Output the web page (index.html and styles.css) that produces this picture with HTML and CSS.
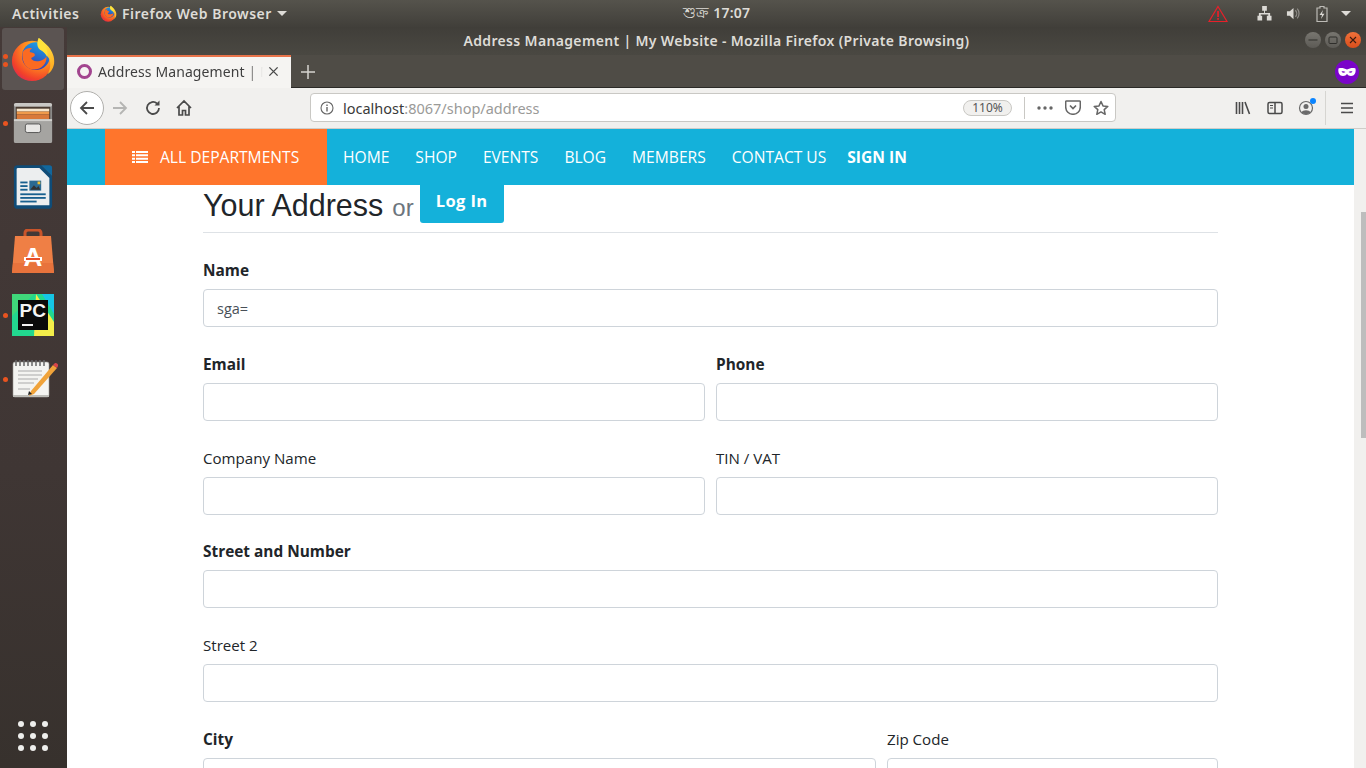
FILE: index.html

```html
<!DOCTYPE html>
<html lang="en">
<head>
<meta charset="UTF-8">
<title>Address Management | My Website</title>
<link rel="stylesheet" href="styles.css">
</head>
<body>

<svg class="defs" width="0" height="0">
  <defs>
    <radialGradient id="ffBody" cx="0.72" cy="0.2" r="0.95">
      <stop offset="0" stop-color="#ffcb2e"/>
      <stop offset="0.45" stop-color="#ff8a1e"/>
      <stop offset="0.8" stop-color="#f2412a"/>
      <stop offset="1" stop-color="#d9245a"/>
    </radialGradient>
    <linearGradient id="ffGlobe" x1="0.7" y1="0" x2="0.3" y2="1">
      <stop offset="0" stop-color="#16a4e6"/>
      <stop offset="1" stop-color="#3a30b0"/>
    </linearGradient>
    <linearGradient id="ffTail" x1="0.3" y1="0" x2="0.7" y2="1">
      <stop offset="0" stop-color="#fff04a"/>
      <stop offset="1" stop-color="#ffa51e"/>
    </linearGradient>
    <symbol id="firefox" viewBox="0 0 48 48">
      <circle cx="23" cy="26" r="21" fill="url(#ffBody)"/>
      <circle cx="27" cy="21" r="14.5" fill="url(#ffGlobe)"/>
      <path d="M13 17c3-4 7-5 10-4-2 1-3 3-2 4 2 0 5 1 5 3 0 1-3 2-4 3 1 3 5 4 9 3 3-1 6-2 7-5 1 7-5 14-13 14-7 0-13-6-12-18z" fill="#fb6a22"/>
      <path d="M30 2c3 2 7 6 10 9 4 5 7 11 6 18-1 6-4 9-7 11 3-5 4-11 2-16-2-4-6-8-10-10-2-4-2-8-1-12z" fill="url(#ffTail)"/>
      <path d="M30 2c-2 4-2 8 0 11 4 2 7 5 9 9 1-6-2-15-9-20z" fill="#ffe23a"/>
    </symbol>
  </defs>
</svg>

<header class="topbar">
  <span class="activities">Activities</span>
  <span class="app-menu">
    <svg class="app-ff"><use href="#firefox"/></svg>
    Firefox Web Browser
    <i class="caret"></i>
  </span>
  <span class="clock"><span class="clock-day">শুক্র</span> 17:07</span>
  <svg class="tray-warn" viewBox="0 0 20 18"><path d="M10 1.500 19 16.500H1z" fill="none" stroke="#e8202a" stroke-width="1.200"/><rect x="9.200" y="6" width="1.700" height="6" fill="#e8202a"/><rect x="9.200" y="13" width="1.700" height="1.800" fill="#e8202a"/></svg>
  <svg class="tray-net" viewBox="0 0 16 16"><path d="M5.500 0h5v5h-2v2.500h5.500v3h1.500v5h-5v-5h1.500V9H4v1.500h1.500v5h-5v-5H2v-3h5.500V5h-2z" fill="#dcdad5"/></svg>
  <svg class="tray-vol" viewBox="0 0 16 16"><path d="M1 5.500h3L8 2v12L4 10.500H1z" fill="#dcdad5"/><path d="M10 4.500a5 5 0 0 1 0 7M12 2.800a8 8 0 0 1 0 10.400" fill="none" stroke="#8f8d88" stroke-width="1.300"/></svg>
  <svg class="tray-bat" viewBox="0 0 12 16"><path d="M4 .5h4v1.500h3v13.500H1V2h3z" fill="none" stroke="#bdbbb6" stroke-width="1.200"/><path d="M7 4 3.500 9H6l-1 4 3.500-5.200H6z" fill="#dcdad5"/></svg>
  <i class="caret tray-caret"></i>
</header>

<div class="desktop">
  <aside class="dock">
    <div class="dock-item active">
      <i class="dot dot-a"></i><i class="dot dot-b"></i>
      <svg class="dock-ff"><use href="#firefox"/></svg>
    </div>
    <div class="dock-item">
      <i class="dot"></i>
      <svg class="dock-icon" viewBox="0 0 44 44">
        <rect x="2" y="1" width="40" height="42" rx="3" fill="#8a8987"/>
        <rect x="2" y="1" width="40" height="4" rx="2" fill="#c9c8c5"/>
        <rect x="4" y="5" width="36" height="13" fill="#4a3b30"/>
        <rect x="5" y="7" width="34" height="3" fill="#f5e6cf"/>
        <rect x="5" y="10" width="34" height="3" fill="#ef9a4c"/>
        <rect x="5" y="13" width="34" height="5" fill="#d9793a"/>
        <rect x="2" y="18" width="40" height="25" rx="2" fill="#a5a4a1"/>
        <rect x="2" y="18" width="40" height="2" fill="#d2d1ce"/>
        <rect x="14" y="23" width="16" height="9" rx="2" fill="#e8e7e5" stroke="#555" stroke-width="1"/>
      </svg>
    </div>
    <div class="dock-item">
      <svg class="dock-icon writer" viewBox="0 0 44 50">
        <path d="M5 1h26l12 12v32a4 4 0 0 1-4 4H5a4 4 0 0 1-4-4V5a4 4 0 0 1 4-4z" fill="#0f4c78"/>
        <path d="M5 4h24l11 11v30H4V5z" fill="#eceeef"/>
        <path d="M31 1h9a3 3 0 0 1 3 3v9z" fill="#11679d"/>
        <rect x="8" y="19" width="8" height="2" fill="#18608f"/>
        <rect x="8" y="23" width="8" height="2" fill="#18608f"/>
        <rect x="8" y="27" width="8" height="2" fill="#18608f"/>
        <rect x="18" y="18" width="13" height="11" fill="#2b6a92"/>
        <path d="M19 28l4-5 3 3 2-2 2 4z" fill="#333"/>
        <rect x="27" y="19" width="3" height="3" fill="#f2c230"/>
        <rect x="8" y="32" width="28" height="2" fill="#18608f"/>
        <rect x="8" y="36" width="28" height="2" fill="#18608f"/>
        <rect x="8" y="40" width="18" height="2" fill="#18608f"/>
      </svg>
    </div>
    <div class="dock-item">
      <svg class="dock-icon store" viewBox="0 0 42 44">
        <path d="M13 9V4a3 3 0 0 1 3-3h10a3 3 0 0 1 3 3v5" fill="none" stroke="#c9542a" stroke-width="3"/>
        <path d="M3 7h36l3 37H0z" fill="#ef7f45"/>
        <path d="M1 34h40l1 10H0z" fill="#e8733c"/>
        <text class="store-a" x="21" y="37" text-anchor="middle">A</text>
        <rect x="12" y="28" width="18" height="4" fill="#fff"/>
        <rect x="14" y="29" width="14" height="2" fill="#e8502a"/>
      </svg>
    </div>
    <div class="dock-item">
      <i class="dot"></i>
      <svg class="dock-icon" viewBox="0 0 42 42">
        <rect width="42" height="42" fill="#22d88f"/>
        <path d="M24 0 42 28v14H22z" fill="#f4ee4a"/>
        <path d="M14 0h16L42 20V0z" fill="#16c6e6"/>
        <path d="M0 0h22L0 22z" fill="#3fd87a"/>
        <rect x="6" y="6" width="30" height="30" fill="#0a0a0a"/>
        <text class="pc-text" x="7.500" y="23">PC</text>
        <rect x="10" y="30" width="11" height="2" fill="#f2f2f2"/>
      </svg>
    </div>
    <div class="dock-item">
      <i class="dot"></i>
      <svg class="dock-icon note" viewBox="0 0 46 40">
        <rect x="1" y="3" width="36" height="35" rx="2" fill="#f4f4f1" stroke="#9a9a96" stroke-width=".6"/>
        <path d="M1 36h36v2H1z" fill="#bdbdb8"/>
        <path d="M4 1v6M8 1v6M12 1v6M16 1v6M20 1v6M24 1v6M28 1v6M32 1v6" stroke="#666" stroke-width="1.500"/>
        <path d="M6 12h24M6 16h24M6 20h20M6 24h16M6 30h12" stroke="#aaa" stroke-width="1"/>
        <path d="M19 32 41 6l4 3-23 26-5 2z" fill="#f0a33a"/>
        <path d="M41 6l2-2a2.500 2.500 0 0 1 3 3l-1 2z" fill="#d8454a"/>
        <path d="M17 32l-1 4 4-1z" fill="#222"/>
      </svg>
    </div>
    <div class="app-grid">
      <i></i><i></i><i></i><i></i><i></i><i></i><i></i><i></i><i></i>
    </div>
  </aside>

  <div class="window">
    <div class="titlebar">
      <span class="win-title">Address Management | My Website - Mozilla Firefox (Private Browsing)</span>
      <span class="win-btns">
        <i class="win-btn"><svg viewBox="0 0 16 16"><path d="M3.500 8h9" stroke="#2f2e2b" stroke-width="1"/></svg></i>
        <i class="win-btn"><svg viewBox="0 0 16 16"><rect x="4" y="5" width="8" height="6.500" rx="1" fill="none" stroke="#2f2e2b"/></svg></i>
        <i class="win-btn close"><svg viewBox="0 0 16 16"><path d="M5 5l6 6M11 5l-6 6" stroke="#3a1b10" stroke-width="1.100"/></svg></i>
      </span>
    </div>

    <div class="tabbar">
      <div class="tab">
        <i class="tab-fav"></i>
        <span class="tab-title">Address Management | M</span>
        <svg class="tab-close" viewBox="0 0 12 12"><path d="M1.500 1.500l9 9M10.500 1.500l-9 9" stroke="#4a4a4a" stroke-width="1.500"/></svg>
      </div>
      <svg class="new-tab" viewBox="0 0 14 14"><path d="M7 0v14M0 7h14" stroke="#d6d4cf" stroke-width="1.500"/></svg>
      <svg class="mask" viewBox="0 0 24 24"><circle cx="12" cy="12" r="12" fill="#7a04c9"/><path d="M3.500 8.500c3-1 6 0 8.500 1 2.500-1 5.500-2 8.500-1 .8 4-1 7.500-4.500 7.500-2 0-3-1-4-2-1 1-2 2-4 2-3.500 0-5.300-3.500-4.500-7.500z" fill="#fff"/><path d="M6.500 11.500c1.500-.6 3-.4 4 .5-1.500 1-3 1-4-.5zM17.500 11.500c-1.500-.6-3-.4-4 .5 1.500 1 3 1 4-.5z" fill="#7a04c9"/></svg>
    </div>

    <div class="toolbar">
      <span class="back"><svg viewBox="0 0 18 18"><path d="M16 9H3M9 3 3 9l6 6" fill="none" stroke="#4a4a4a" stroke-width="1.800"/></svg></span>
      <svg class="tool forward" viewBox="0 0 18 18"><path d="M2 9h13M9 3l6 6-6 6" fill="none" stroke="#b5b5b3" stroke-width="1.800"/></svg>
      <svg class="tool reload" viewBox="0 0 18 18"><path d="M15 9a6 6 0 1 1-2-4.500" fill="none" stroke="#4a4a4a" stroke-width="1.800"/><path d="M15.500 1.500v5h-5z" fill="#4a4a4a"/></svg>
      <svg class="tool home" viewBox="0 0 18 18"><path d="M2 9l7-7 7 7M4 7.500V16h3.500v-4.500h3V16H14V7.500" fill="none" stroke="#4a4a4a" stroke-width="1.700"/></svg>

      <div class="urlbar">
        <svg class="url-info" viewBox="0 0 14 14"><circle cx="7" cy="7" r="6" fill="none" stroke="#666" stroke-width="1.100"/><rect x="6.300" y="6" width="1.400" height="4.500" fill="#666"/><rect x="6.300" y="3.500" width="1.400" height="1.500" fill="#666"/></svg>
        <span class="url-text"><b>localhost</b>:8067/shop/address</span>
        <span class="url-zoom">110%</span>
        <i class="url-sep"></i>
        <svg class="url-more" viewBox="0 0 16 4"><circle cx="2" cy="2" r="1.700"/><circle cx="8" cy="2" r="1.700"/><circle cx="14" cy="2" r="1.700"/></svg>
        <svg class="url-pocket" viewBox="0 0 16 15"><path d="M1.500 1h13a.8.8 0 0 1 .8.8V7a7.300 7.300 0 0 1-14.600 0V1.800a.8.8 0 0 1 .8-.8z" fill="none" stroke="#666" stroke-width="1.500"/><path d="M5 5.500l3 3 3-3" fill="none" stroke="#666" stroke-width="1.700"/></svg>
        <svg class="url-star" viewBox="0 0 16 16"><path d="M8 1.500l2 4.400 4.800.5-3.600 3.200 1 4.700L8 11.900l-4.200 2.400 1-4.700L1.200 6.400 6 5.900z" fill="none" stroke="#666" stroke-width="1.500" stroke-linejoin="round"/></svg>
      </div>

      <svg class="tool lib" viewBox="0 0 16 16"><path d="M1.500 2v12M4.500 2v12M7.500 2v12M10 2l4.500 12" fill="none" stroke="#4a4a4a" stroke-width="1.600"/></svg>
      <svg class="tool side" viewBox="0 0 16 16"><rect x="1" y="2.500" width="14" height="11" rx="1.500" fill="none" stroke="#4a4a4a" stroke-width="1.500"/><path d="M8 2.500v11" stroke="#4a4a4a" stroke-width="1.500"/><path d="M3 5.500h3M3 8h3" stroke="#4a4a4a"/></svg>
      <span class="account">
        <svg class="tool" viewBox="0 0 16 16"><circle cx="8" cy="8" r="6.500" fill="none" stroke="#6a6a6a" stroke-width="1.200"/><circle cx="8" cy="6.500" r="2.500" fill="#6a6a6a"/><path d="M3.500 12.500c1-3 8-3 9 0-2 2-7 2-9 0z" fill="#6a6a6a"/></svg>
        <i class="account-dot"></i>
      </span>
      <i class="tool-sep"></i>
      <svg class="tool burger" viewBox="0 0 14 14"><path d="M1 2.500h12M1 7h12M1 11.500h12" stroke="#4a4a4a" stroke-width="1.600"/></svg>
    </div>

    <div class="viewport">
      <div class="page">
        <nav class="shopnav">
          <a class="departments">
            <svg class="list-icon" viewBox="0 0 16 12"><path d="M0 0h3v2H0zM4 0h12v2H4zM0 3.300h3v2H0zM4 3.300h12v2H4zM0 6.700h3v2H0zM4 6.700h12v2H4zM0 10h3v2H0zM4 10h12v2H4z" fill="#fff"/></svg>
            ALL DEPARTMENTS
          </a>
          <a class="nav-link">HOME</a>
          <a class="nav-link">SHOP</a>
          <a class="nav-link">EVENTS</a>
          <a class="nav-link">BLOG</a>
          <a class="nav-link">MEMBERS</a>
          <a class="nav-link">CONTACT US</a>
          <a class="nav-link sign-in">SIGN IN</a>
        </nav>

        <form class="address-form">
          <div class="form-head">
            <h1>Your Address</h1>
            <small>or</small>
            <a class="btn-login">Log In</a>
          </div>

          <div class="field">
            <label class="req">Name</label>
            <input type="text" value="sga=">
          </div>

          <div class="form-row">
            <div class="field">
              <label class="req">Email</label>
              <input type="text">
            </div>
            <div class="field">
              <label class="req">Phone</label>
              <input type="text">
            </div>
          </div>

          <div class="form-row">
            <div class="field">
              <label>Company Name</label>
              <input type="text">
            </div>
            <div class="field">
              <label>TIN / VAT</label>
              <input type="text">
            </div>
          </div>

          <div class="field">
            <label class="req">Street and Number</label>
            <input type="text">
          </div>

          <div class="field">
            <label>Street 2</label>
            <input type="text">
          </div>

          <div class="form-row city-row">
            <div class="field">
              <label class="req">City</label>
              <input type="text">
            </div>
            <div class="field">
              <label>Zip Code</label>
              <input type="text">
            </div>
          </div>
        </form>
      </div>
      <div class="scrollbar"><i class="thumb"></i></div>
    </div>
  </div>
</div>

</body>
</html>
```

FILE: styles.css

```css
*{box-sizing:border-box}
html,body{margin:0;height:100%;overflow:hidden}
body{width:1366px;height:768px;display:flex;flex-direction:column;font-family:"Noto Sans","Open Sans",sans-serif;background:#fff}
.defs{position:absolute}
i{display:block;font-style:normal}

/* --- ubuntu top bar --- */
.topbar{height:27px;flex:none;display:flex;align-items:center;position:relative;color:#dedcd7;font-size:14px;font-weight:600;letter-spacing:.5px;background:linear-gradient(#55534c,#413f3a)}
.activities{margin-left:12px;width:88px}
.app-menu{display:flex;align-items:center;flex:1}
.app-ff{width:17px;height:17px;margin-right:5px}
.caret{width:0;height:0;border-left:5px solid transparent;border-right:5px solid transparent;border-top:5px solid #dedcd7;margin-left:5px}
.clock{position:absolute;left:683px;top:2px;font-size:14px;line-height:20px;font-weight:600;letter-spacing:.2px}
.clock-day{font-weight:400;font-size:15px}
.tray-warn{width:20px;height:18px}
.tray-net{width:15px;height:15px;margin-left:29px}
.tray-vol{width:15px;height:15px;margin-left:14px}
.tray-bat{width:12px;height:16px;margin-left:15px}
.tray-caret{margin:0 15px 0 13px}

.desktop{flex:1;display:flex;min-height:0}

/* --- dock --- */
.dock{width:67px;flex:none;display:flex;flex-direction:column;padding:1px 0 0 2px;background:linear-gradient(#453a38,#3f3634 60%,#37312d);position:relative}
.dock-item{width:62px;height:64px;display:flex;align-items:center;justify-content:center;position:relative;flex:none;padding-bottom:3px}
.dock-item.active{height:62px;margin-bottom:2px;background:#5b5452;border-radius:3px;padding-bottom:0}
.dock-icon{width:42px;height:42px}
.dock-icon.writer{width:40px;height:48px}
.dock-icon.store{width:42px;height:44px}
.dock-icon.note{width:46px;height:40px;margin-left:4px}
.dock-ff{width:46px;height:46px}
.dot{position:absolute;left:1px;top:50%;width:5px;height:5px;margin-top:-3px;border-radius:50%;background:#e95420}
.dot-a{margin-top:-5px}
.dot-b{margin-top:3px}
.store-a{font:bold 26px "Liberation Sans",sans-serif;fill:#fff}
.pc-text{font:bold 19px "Liberation Sans",sans-serif;fill:#f5f5f5}
.app-grid{margin:auto 0 17px 16px;display:grid;grid-template-columns:repeat(3,6px);gap:6px}
.app-grid i{width:6px;height:6px;border-radius:50%;background:#eeeeec}

/* --- firefox window --- */
.window{flex:1;min-width:0;display:flex;flex-direction:column}
.titlebar{height:28px;flex:none;display:flex;align-items:center;background:linear-gradient(#403e39,#4a4842);position:relative;padding-bottom:2px}
.win-title{flex:1;text-align:center;color:#dedcd7;font-size:14px;font-weight:600;letter-spacing:.34px}
.win-btns{display:flex;gap:4px;position:absolute;right:5px;top:5px}
.win-btn{width:16px;height:16px;border-radius:50%;background:linear-gradient(#787670,#5c5a55)}
.win-btn svg{display:block}
.win-btn.close{background:linear-gradient(#f0713a,#d94e1c)}

.tabbar{height:33px;flex:none;display:flex;align-items:flex-start;background:#4f4c46;border-bottom:1px solid #2b2a27}
.tab{width:224px;height:33px;flex:none;display:flex;align-items:center;background:#f5f4f2;border-top:2px solid #e8734a;padding:0 0 2px 10px}
.tab-fav{width:15px;height:15px;border-radius:50%;border:3px solid #a2458f;flex:none}
.tab-title{width:165px;margin-left:6px;white-space:nowrap;font-size:14px;letter-spacing:.1px;color:#3f3f3f;-webkit-mask-image:linear-gradient(90deg,#000 90%,transparent)}
.tab-close{width:11px;height:11px;margin-left:5px}
.new-tab{width:14px;height:14px;margin:10px 0 0 10px}
.mask{width:24px;height:24px;margin:5px 7px 0 auto}

.toolbar{height:41px;flex:none;display:flex;align-items:center;background:#f1f0ee;border-bottom:1px solid #cfcdc9;padding-bottom:1px}
.tool{width:16px;height:16px;flex:none;display:block}
.back{width:34px;height:34px;margin-left:3px;border-radius:50%;background:#fff;border:1px solid #b0afac;display:flex;align-items:center;justify-content:center;flex:none}
.back svg{width:18px;height:18px}
.forward{margin-left:7px;width:18px;height:18px}
.reload{margin-left:15px;width:18px;height:18px}
.home{margin-left:13px;width:18px;height:18px}
.urlbar{width:806px;height:29px;flex:none;margin-left:117px;background:#fff;border:1px solid #c9c8c4;border-radius:4px;display:flex;align-items:center}
.url-info{width:14px;height:14px;margin-left:9px}
.url-text{margin-left:9px;width:620px;font-size:14.500px;color:#9a9a98}
.url-text b{font-weight:400;color:#3a3a3a}
.url-zoom{width:49px;height:16px;border:1px solid #c9c8c4;border-radius:8px;background:#f1f0ee;font-size:12px;line-height:14px;text-align:center;color:#555}
.url-sep{width:1px;height:22px;background:#c9c8c4;margin-left:12px}
.url-more{width:16px;height:4px;margin-left:12px;fill:#666}
.url-pocket{width:16px;height:15px;margin-left:12px}
.url-star{width:16px;height:16px;margin-left:12px}
.lib{margin-left:119px}
.side{margin-left:16px}
.account{position:relative;margin-left:15px;display:block}
.account-dot{position:absolute;right:-2px;top:-2px;width:6px;height:6px;border-radius:50%;background:#0a84ff}
.tool-sep{width:1px;height:34px;background:#d6d5d1;margin-left:11px}
.burger{width:14px;height:14px;margin-left:14px}

/* --- page content --- */
.viewport{flex:1;min-height:0;display:flex;overflow:hidden}
.page{flex:1;min-width:0;overflow:hidden;background:#fff;color:#212529;font-family:"Open Sans","Noto Sans",sans-serif;font-size:15.100px}
.scrollbar{width:12px;flex:none;background:#f1f0ee;padding:83px 0 0 7px}
.thumb{width:5px;height:226px;background:#bdbdbd}

.shopnav{height:56px;display:flex;align-items:center;padding-left:38px;background:#14b1da;color:#fff;font-size:15.600px}
.departments{width:222px;height:56px;display:flex;align-items:center;padding-left:27px;background:#ff752c;margin-right:3px}
.list-icon{width:16px;height:12px;margin-right:12px}
.nav-link{padding:0 13px}
.sign-in{font-weight:700;padding-left:8px}

.address-form{margin-left:136px;width:1015px}
.form-head{height:48px;display:flex;align-items:flex-start;border-bottom:1px solid #dee2e6;margin-bottom:24px}
.form-head h1{margin:0;font:400 30.500px/41px "Liberation Sans",Arial,sans-serif;color:#212529}
.form-head small{font:400 24px/41px "Liberation Sans",Arial,sans-serif;color:#6c757d;margin:2px 6px 0 9px}
.btn-login{height:38px;width:84px;text-align:center;line-height:31px;background:#14b1da;color:#fff;font-size:16.500px;font-weight:700;letter-spacing:.4px;border-radius:0 0 3px 3px}

.field{margin-bottom:23.800px;padding-top:2px}
.field label{display:block;line-height:22px;margin-bottom:8px}
.field label.req{font-weight:700;font-size:15.400px;line-height:24px;margin-bottom:6px}
.field input{display:block;width:100%;height:38px;padding:0 13px;border:1px solid #ced4da;border-radius:4px;font:inherit;font-size:14.500px;color:#495057;background:#fff}
.form-row{display:grid;grid-template-columns:1fr 1fr;column-gap:11px}
.city-row{grid-template-columns:1fr 331px}
```
